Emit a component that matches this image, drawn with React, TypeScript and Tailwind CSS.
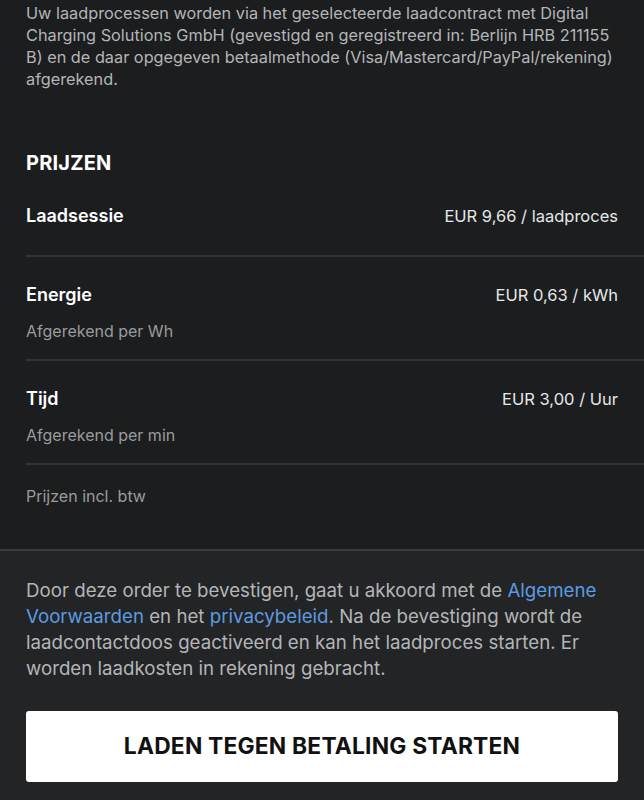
import React from 'react';

const rows = [
  { label: 'Laadsessie', price: 'EUR 9,66 / laadproces' },
  { label: 'Energie', price: 'EUR 0,63 / kWh', note: 'Afgerekend per Wh' },
  { label: 'Tijd', price: 'EUR 3,00 / Uur', note: 'Afgerekend per min' },
];

export default function App() {
  return (
    <div
      className="w-[644px] h-[800px] overflow-hidden bg-[#1c1d1f] flex flex-col"
      style={{ fontFamily: "Inter, 'Noto Sans', sans-serif" }}
    >
      {/* contractinformatie */}
      <p className="px-[26px] pt-[2px] text-[16.3px] leading-[22px] text-[#b4b5b7]">
        Uw laadprocessen worden via het geselecteerde laadcontract met Digital Charging Solutions GmbH (gevestigd en geregistreerd in: Berlijn HRB 211155 B) en de daar opgegeven betaalmethode (Visa/Mastercard/PayPal/rekening) afgerekend.
      </p>

      {/* prijzen */}
      <div className="pl-[26px] pt-[60px]">
        <h2 className="text-[20px] leading-[26px] font-bold text-white tracking-[0.2px]">PRIJZEN</h2>
        <div className="mt-[2px]">
          {rows.map((r) => (
            <div
              key={r.label}
              className={
                r.note
                  ? 'border-b-2 border-[#333436] pr-[26px] pt-[25px] pb-[18px]'
                  : 'border-b-2 border-[#333436] pr-[26px] pt-[25px] pb-[26px]'
              }
            >
              <div className="flex items-center justify-between">
                <span className="text-[18px] leading-[26px] font-semibold text-white">{r.label}</span>
                <span className="text-[16.5px] leading-[26px] text-[#e6e7e8]">{r.price}</span>
              </div>
              {r.note && (
                <div className="mt-[13px] text-[16px] leading-[20px] text-[#9a9b9d]">{r.note}</div>
              )}
            </div>
          ))}
          <div className="pt-[20px] text-[16px] leading-[22px] text-[#9a9b9d]">Prijzen incl. btw</div>
        </div>
      </div>

      {/* bevestiging */}
      <div className="mt-auto border-t-2 border-[#3a3b3d] bg-[#232426] px-[26px] pt-[27px] pb-[18px]">
        <p className="text-[18.7px] leading-[26px] text-[#b4b5b7]">
          Door deze order te bevestigen, gaat u akkoord met de{' '}
          <span className="text-[#5b9be0]">Algemene Voorwaarden</span> en het{' '}
          <span className="text-[#5b9be0]">privacybeleid</span>. Na de bevestiging wordt de laadcontactdoos geactiveerd en kan het laadproces starten. Er worden laadkosten in rekening gebracht.
        </p>
        <button className="mt-[29px] w-full h-[71px] rounded-[3px] bg-white text-[#111] text-[22.8px] font-bold tracking-[0.2px]">
          LADEN TEGEN BETALING STARTEN
        </button>
      </div>
    </div>
  );
}
